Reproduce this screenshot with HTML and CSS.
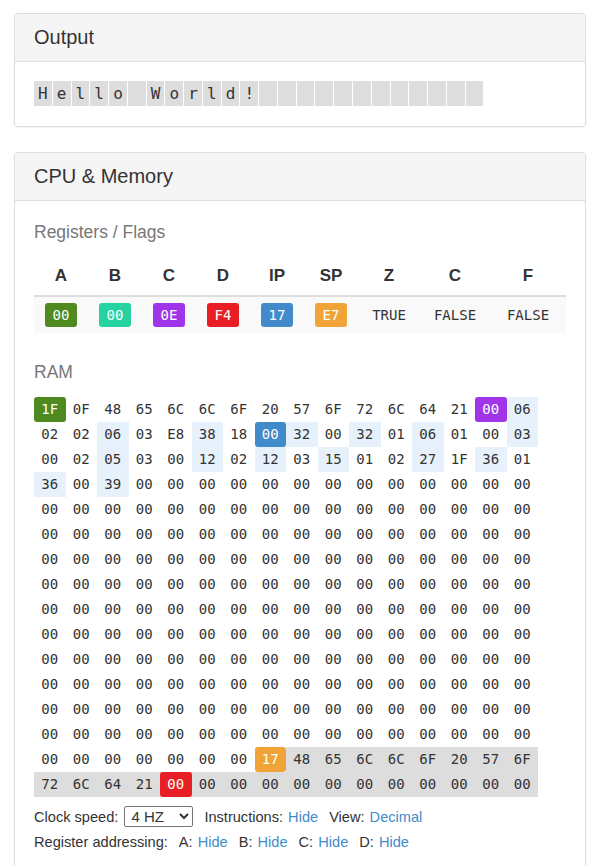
FILE: index.html
```html
<!DOCTYPE html>
<html lang="en">
<head>
  <meta charset="UTF-8" />
  <title>Simple 8-bit Assembler Simulator</title>
  <link rel="stylesheet" href="styles.css">
</head>
<body>
  <div class="panel">
    <div class="panel-heading">
      <h4 class="panel-title">Output</h4>
    </div>
    <div class="panel-body output-body">
      <span class="out-char">H</span><span class="out-char">e</span><span class="out-char">l</span><span class="out-char">l</span><span class="out-char">o</span><span class="out-char">&nbsp;</span><span class="out-char">W</span><span class="out-char">o</span><span class="out-char">r</span><span class="out-char">l</span><span class="out-char">d</span><span class="out-char">!</span><span class="out-char">&nbsp;</span><span class="out-char">&nbsp;</span><span class="out-char">&nbsp;</span><span class="out-char">&nbsp;</span><span class="out-char">&nbsp;</span><span class="out-char">&nbsp;</span><span class="out-char">&nbsp;</span><span class="out-char">&nbsp;</span><span class="out-char">&nbsp;</span><span class="out-char">&nbsp;</span><span class="out-char">&nbsp;</span><span class="out-char">&nbsp;</span>
    </div>
  </div>

  <div class="panel">
    <div class="panel-heading">
      <h4 class="panel-title">CPU &amp; Memory</h4>
    </div>
    <div class="panel-body cpu-body">
      <h4 class="section-title">Registers / Flags</h4>
      <table class="regs">
        <thead>
          <tr>
            <th class="col-reg">A</th>
            <th class="col-reg">B</th>
            <th class="col-reg">C</th>
            <th class="col-reg">D</th>
            <th class="col-reg">IP</th>
            <th class="col-reg">SP</th>
            <th class="col-z">Z</th>
            <th class="col-c">C</th>
            <th>F</th>
          </tr>
        </thead>
        <tbody>
          <tr>
            <td><span class="badge m-a">00</span></td>
            <td><span class="badge m-b">00</span></td>
            <td><span class="badge m-c">0E</span></td>
            <td><span class="badge m-d">F4</span></td>
            <td><span class="badge m-ip">17</span></td>
            <td><span class="badge m-sp">E7</span></td>
            <td>TRUE</td>
            <td>FALSE</td>
            <td>FALSE</td>
          </tr>
        </tbody>
      </table>

      <h4 class="section-title ram-title">RAM</h4>
      <div class="ram">
        <span><span class="mk m-a">1F</span></span><span>0F</span><span>48</span><span>65</span><span>6C</span><span>6C</span><span>6F</span><span>20</span><span>57</span><span>6F</span><span>72</span><span>6C</span><span>64</span><span>21</span><span><span class="mk m-c">00</span></span><span class="ins">06</span>
        <span>02</span><span>02</span><span class="ins">06</span><span>03</span><span>E8</span><span class="ins">38</span><span>18</span><span><span class="mk m-ip">00</span></span><span class="ins">32</span><span>00</span><span class="ins">32</span><span>01</span><span class="ins">06</span><span>01</span><span>00</span><span class="ins">03</span>
        <span>00</span><span>02</span><span class="ins">05</span><span>03</span><span>00</span><span class="ins">12</span><span>02</span><span class="ins">12</span><span>03</span><span class="ins">15</span><span>01</span><span>02</span><span class="ins">27</span><span>1F</span><span class="ins">36</span><span>01</span>
        <span class="ins">36</span><span>00</span><span class="ins">39</span><span>00</span><span>00</span><span>00</span><span>00</span><span>00</span><span>00</span><span>00</span><span>00</span><span>00</span><span>00</span><span>00</span><span>00</span><span>00</span>
        <span>00</span><span>00</span><span>00</span><span>00</span><span>00</span><span>00</span><span>00</span><span>00</span><span>00</span><span>00</span><span>00</span><span>00</span><span>00</span><span>00</span><span>00</span><span>00</span>
        <span>00</span><span>00</span><span>00</span><span>00</span><span>00</span><span>00</span><span>00</span><span>00</span><span>00</span><span>00</span><span>00</span><span>00</span><span>00</span><span>00</span><span>00</span><span>00</span>
        <span>00</span><span>00</span><span>00</span><span>00</span><span>00</span><span>00</span><span>00</span><span>00</span><span>00</span><span>00</span><span>00</span><span>00</span><span>00</span><span>00</span><span>00</span><span>00</span>
        <span>00</span><span>00</span><span>00</span><span>00</span><span>00</span><span>00</span><span>00</span><span>00</span><span>00</span><span>00</span><span>00</span><span>00</span><span>00</span><span>00</span><span>00</span><span>00</span>
        <span>00</span><span>00</span><span>00</span><span>00</span><span>00</span><span>00</span><span>00</span><span>00</span><span>00</span><span>00</span><span>00</span><span>00</span><span>00</span><span>00</span><span>00</span><span>00</span>
        <span>00</span><span>00</span><span>00</span><span>00</span><span>00</span><span>00</span><span>00</span><span>00</span><span>00</span><span>00</span><span>00</span><span>00</span><span>00</span><span>00</span><span>00</span><span>00</span>
        <span>00</span><span>00</span><span>00</span><span>00</span><span>00</span><span>00</span><span>00</span><span>00</span><span>00</span><span>00</span><span>00</span><span>00</span><span>00</span><span>00</span><span>00</span><span>00</span>
        <span>00</span><span>00</span><span>00</span><span>00</span><span>00</span><span>00</span><span>00</span><span>00</span><span>00</span><span>00</span><span>00</span><span>00</span><span>00</span><span>00</span><span>00</span><span>00</span>
        <span>00</span><span>00</span><span>00</span><span>00</span><span>00</span><span>00</span><span>00</span><span>00</span><span>00</span><span>00</span><span>00</span><span>00</span><span>00</span><span>00</span><span>00</span><span>00</span>
        <span>00</span><span>00</span><span>00</span><span>00</span><span>00</span><span>00</span><span>00</span><span>00</span><span>00</span><span>00</span><span>00</span><span>00</span><span>00</span><span>00</span><span>00</span><span>00</span>
        <span>00</span><span>00</span><span>00</span><span>00</span><span>00</span><span>00</span><span>00</span><span><span class="mk m-sp">17</span></span><span class="out">48</span><span class="out">65</span><span class="out">6C</span><span class="out">6C</span><span class="out">6F</span><span class="out">20</span><span class="out">57</span><span class="out">6F</span>
        <span class="out">72</span><span class="out">6C</span><span class="out">64</span><span class="out">21</span><span class="out"><span class="mk m-d">00</span></span><span class="out">00</span><span class="out">00</span><span class="out">00</span><span class="out">00</span><span class="out">00</span><span class="out">00</span><span class="out">00</span><span class="out">00</span><span class="out">00</span><span class="out">00</span><span class="out">00</span>
      </div>

      <div class="controls">
        <div class="ctl-line">
          <span>Clock speed:</span>
          <select class="speed">
            <option>1 HZ</option>
            <option selected>4 HZ</option>
            <option>8 HZ</option>
            <option>16 HZ</option>
          </select>
          <span class="ctl">Instructions: <a href="#">Hide</a></span>
          <span class="ctl">View: <a href="#">Decimal</a></span>
        </div>
        <div class="ctl-line">
          <span>Register addressing:</span>
          <span class="ctl">A: <a href="#">Hide</a></span>
          <span class="ctl">B: <a href="#">Hide</a></span>
          <span class="ctl">C: <a href="#">Hide</a></span>
          <span class="ctl">D: <a href="#">Hide</a></span>
        </div>
      </div>
    </div>
  </div>
</body>
</html>
```

FILE: styles.css
```css
* { box-sizing: border-box; }
body {
  margin: 0;
  padding: 13px 16px 0 14px;
  font-family: "Liberation Sans", Arial, sans-serif;
  font-size: 14.6px;
  color: #333;
  background: #fff;
}

.panel {
  border: 1px solid #ddd;
  border-radius: 4px;
  margin-bottom: 25px;
  background: #fff;
  box-shadow: 0 1px 1px rgba(0,0,0,0.05);
}
.panel-heading {
  background: #f5f5f5;
  border-bottom: 1px solid #ddd;
  border-radius: 3px 3px 0 0;
  padding: 12px 19px 13px;
}
.panel-title {
  margin: 0;
  font-size: 20px;
  font-weight: normal;
  line-height: 22px;
  color: #333;
}
.panel-body { padding: 20px 19px; }
.cpu-body { padding-top: 21px; }

.output-body { padding: 19px 19px 20px; display: flex; }
.out-char {
  font-family: "DejaVu Sans Mono", monospace;
  font-size: 16px;
  line-height: 25px;
  padding: 0 4.07px;
  margin-right: 1px;
  background: #ddd;
}

.section-title {
  margin: 0 0 13px;
  font-size: 17.5px;
  font-weight: normal;
  line-height: 20px;
  color: #777;
}
.ram-title { margin-bottom: 15px; }

.regs {
  width: 100%;
  table-layout: fixed;
  border-collapse: collapse;
  margin-bottom: 29px;
}
.regs th {
  font-size: 17px;
  font-weight: bold;
  line-height: 24px;
  padding: 9px 8px 7px;
  border-bottom: 2px solid #ddd;
  text-align: center;
}
.regs .col-reg { width: 54px; }
.regs .col-z { width: 62px; }
.regs .col-c { width: 70px; }
.regs td {
  background: #f9f9f9;
  padding: 6px 4px;
  text-align: center;
  font-family: "DejaVu Sans Mono", monospace;
  font-size: 14px;
  line-height: 24px;
  color: #333;
}
.badge {
  display: inline-block;
  width: 32px;
  height: 24px;
  line-height: 24px;
  border-radius: 3px;
  color: #fff;
  vertical-align: top;
}

.ram {
  display: grid;
  grid-template-columns: repeat(16, 31.5px);
  grid-auto-rows: 25px;
  font-family: "DejaVu Sans Mono", monospace;
  font-size: 14px;
}
.ram > span {
  text-align: center;
  line-height: 25px;
}
.ram .ins { background: #e6f1fc; }
.ram .out { background: #ddd; }
.mk {
  display: block;
  height: 25px;
  border-radius: 3px;
  color: #fff;
}

.m-a { background: #4e8a20; }
.m-b { background: #26d2a0; }
.m-c { background: #a034e8; }
.m-d { background: #e81e24; }
.m-ip { background: #428bca; }
.m-sp { background: #f0a438; }

.controls { margin-top: 7px; }
.ctl-line {
  display: flex;
  align-items: center;
  height: 25px;
  white-space: nowrap;
}
.ctl { margin-left: 11px; }
.ctl a { color: #428bca; text-decoration: none; margin-left: 1px; }
.speed {
  margin-left: 6px;
  width: 69px;
  height: 21px;
  font-family: "Liberation Sans", Arial, sans-serif;
  font-size: 15px;
  padding: 0 2px;
  border: 1px solid #767676;
  border-radius: 2px;
  background: #fff;
  color: #333;
}
```
